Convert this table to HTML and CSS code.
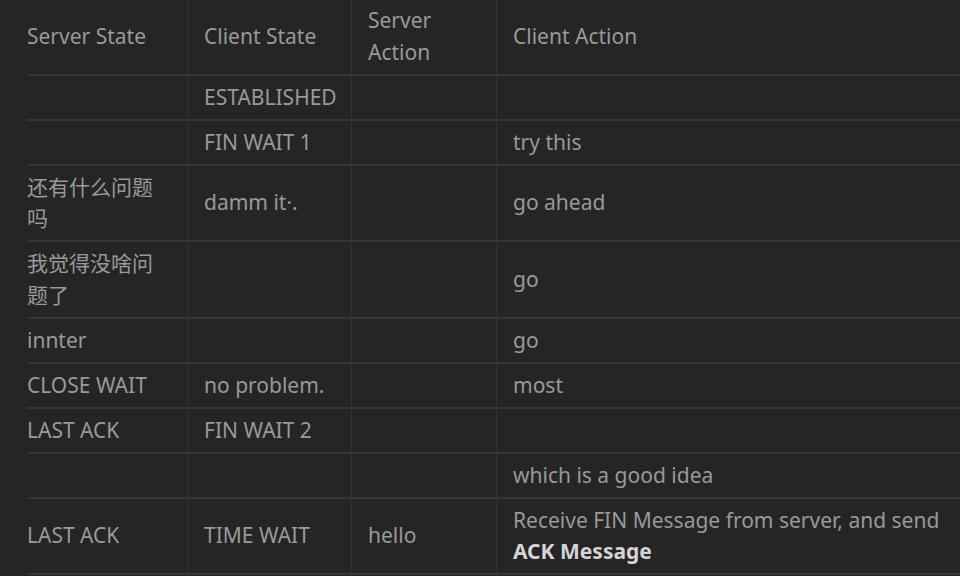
FILE: index.html
```html
<!DOCTYPE html>
<html lang="en">
<head>
<meta charset="utf-8">
<title>TCP states</title>
<link rel="stylesheet" href="styles.css">
</head>
<body>
<table class="states">
  <thead>
    <tr>
      <th class="c1">Server State</th>
      <th class="c2">Client State</th>
      <th class="c3">Server Action</th>
      <th class="c4">Client Action</th>
    </tr>
  </thead>
  <tbody>
    <tr><td></td><td>ESTABLISHED</td><td></td><td></td></tr>
    <tr><td></td><td>FIN WAIT 1</td><td></td><td>try this</td></tr>
    <tr><td>还有什么问题吗</td><td>damm it·.</td><td></td><td>go ahead</td></tr>
    <tr><td>我觉得没啥问题了</td><td></td><td></td><td>go</td></tr>
    <tr><td>innter</td><td></td><td></td><td>go</td></tr>
    <tr><td>CLOSE WAIT</td><td>no problem.</td><td></td><td>most</td></tr>
    <tr><td>LAST ACK</td><td>FIN WAIT 2</td><td></td><td></td></tr>
    <tr><td></td><td></td><td></td><td>which is a good idea</td></tr>
    <tr><td>LAST ACK</td><td>TIME WAIT</td><td>hello</td><td>Receive FIN Message from server, and send <strong>ACK Message</strong></td></tr>
  </tbody>
</table>
</body>
</html>
```
FILE: styles.css
```css
html, body {
  margin: 0;
  background: #252525;
}
body {
  padding-left: 27px;
  overflow: hidden;
  font-family: "Noto Sans", "Noto Sans CJK SC", sans-serif;
  font-size: 21px;
  line-height: 31.5px;
  color: #999999;
}
.states {
  margin-top: -1px;
  width: 933px;
  table-layout: fixed;
  border-collapse: separate;
  border-spacing: 0;
}
.states th,
.states td {
  box-sizing: border-box;
  text-align: left;
  font-weight: normal;
  vertical-align: middle;
  padding: 6px 16px 5.5px 16px;
  border-bottom: 2px solid #353535;
  border-left: 1px solid #333333;
}
.states th:first-child,
.states td:first-child {
  padding-left: 0;
  border-left: none;
}
.states .c1 { width: 160px; }
.states .c2 { width: 164px; }
.states .c3 { width: 145px; }
.states .c4 { width: 464px; }
.states strong {
  color: #d4d4d4;
  font-weight: bold;
}
```
